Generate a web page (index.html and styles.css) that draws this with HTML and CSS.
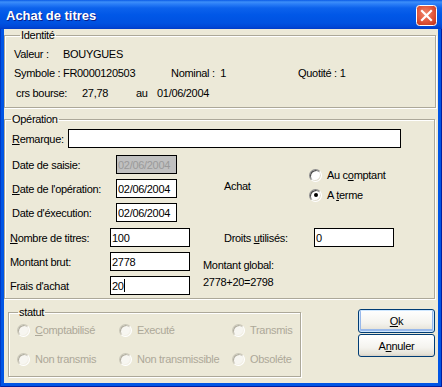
FILE: index.html
```html
<!DOCTYPE html>
<html lang="fr">
<head>
    <meta charset="UTF-8">
    <title>Achat de titres</title>
    <link rel="stylesheet" href="styles.css">
</head>
<body>
    <div class="window">
        <div class="titlebar">
            <span class="title">Achat de titres</span>
            <span class="close">
                <svg width="21" height="21" viewBox="0 0 21 21">
                    <defs>
                        <radialGradient id="cg" cx="45%" cy="40%" r="70%">
                            <stop offset="0" stop-color="#f08a6e"/>
                            <stop offset="0.6" stop-color="#e0553a"/>
                            <stop offset="1" stop-color="#c4371e"/>
                        </radialGradient>
                    </defs>
                    <rect x="0.5" y="0.5" width="20" height="20" rx="3" fill="url(#cg)" stroke="#fff"/>
                    <path d="M6 6 L15 15 M15 6 L6 15" stroke="#fff" stroke-width="2.2" stroke-linecap="square"/>
                </svg>
            </span>
        </div>
        <div class="client">
            <fieldset class="group identite">
                <legend>Identité</legend>
                <div class="id-row">
                    <span class="w-valeur">Valeur :</span><span>BOUYGUES</span>
                </div>
                <div class="id-row">
                    <span class="w-symbole">Symbole : FR0000120503</span><span class="w-nominal">Nominal : &nbsp;1</span><span>Quotité : 1</span>
                </div>
                <div class="id-row crs">
                    <span class="w-crs">crs bourse:</span><span class="w-cours">27,78</span><span class="w-au">au</span><span>01/06/2004</span>
                </div>
            </fieldset>

            <fieldset class="group operation">
                <legend>Opération</legend>
                <div class="remark-row">
                    <label class="remark-label"><u>R</u>emarque:</label>
                    <input class="edit remark" type="text" value="">
                </div>
                <div class="dates">
                    <div class="date-col">
                        <div class="date-row">
                            <label>Date de saisie:</label>
                            <input class="edit date disabled" type="text" value="02/06/2004" disabled>
                        </div>
                        <div class="date-row">
                            <label><u>D</u>ate de l'opération:</label>
                            <input class="edit date" type="text" value="02/06/2004">
                        </div>
                        <div class="date-row">
                            <label>Date d'éxecution:</label>
                            <input class="edit date" type="text" value="02/06/2004">
                        </div>
                    </div>
                    <div class="sens">Achat</div>
                    <div class="radio-col">
                        <div class="radio-item"><span class="radio"></span><span>Au c<u>o</u>mptant</span></div>
                        <div class="radio-item"><span class="radio checked"></span><span>A <u>t</u>erme</span></div>
                    </div>
                </div>
                <div class="amounts">
                    <label><u>N</u>ombre de titres:</label>
                    <input class="edit amount" type="text" value="100">
                    <div class="droits">
                        <label class="droits-label">Droits <u>u</u>tilisés:</label>
                        <input class="edit amount" type="text" value="0">
                    </div>
                    <label>Montant brut:</label>
                    <input class="edit amount" type="text" value="2778">
                    <div class="global">
                        <div>Montant global:</div>
                        <div>2778+20=2798</div>
                    </div>
                    <label>Frais d'achat</label>
                    <div class="edit amount">20<span class="caret"></span></div>
                </div>
            </fieldset>

            <div class="bottom">
                <fieldset class="group statut">
                    <legend>statut</legend>
                    <div class="statut-grid">
                        <div class="radio-item off"><span class="radio"></span><span><u>C</u>omptabilisé</span></div>
                        <div class="radio-item off"><span class="radio"></span><span>Executé</span></div>
                        <div class="radio-item off"><span class="radio"></span><span>Transmis</span></div>
                        <div class="radio-item off"><span class="radio"></span><span>Non transmis</span></div>
                        <div class="radio-item off"><span class="radio"></span><span>Non transmissible</span></div>
                        <div class="radio-item off"><span class="radio"></span><span>Obsoléte</span></div>
                    </div>
                </fieldset>
                <div class="buttons">
                    <button class="btn default"><u>O</u>k</button>
                    <button class="btn">A<u>n</u>nuler</button>
                </div>
            </div>
        </div>
    </div>
</body>
</html>
```

FILE: styles.css
```css
body {
    margin: 0;
    font-family: "Liberation Sans", Arial, sans-serif;
    font-size: 11px;
    letter-spacing: -0.3px;
    color: #000;
    background: #fff;
}
.window {
    width: 442px;
    height: 387px;
    display: flex;
    flex-direction: column;
    background: #0055e5;
    box-shadow: inset 1px 0 0 #0039c4, inset -1px 0 0 #001ea0, inset 0 -1px 0 #001ea0;
}
.titlebar {
    height: 29px;
    flex: none;
    display: flex;
    align-items: center;
    justify-content: space-between;
    padding: 0 5px 0 6px;
    background: linear-gradient(to bottom, #0a5ae6 0, #3d8ff9 2px, #2a7ef7 4px, #0c62ec 8px, #0057e7 15px, #0052e1 23px, #0047d6 27px, #003bc7 29px);
}
.title {
    color: #fff;
    font-weight: bold;
    font-size: 13px;
    letter-spacing: 0;
    text-shadow: 1px 1px 0 #0a1e8a;
    margin-top: 1px;
}
.close {
    display: flex;
    margin-top: 1px;
}
.client {
    flex: 1;
    margin: 0 4px 4px 4px;
    background: #ece9d8;
    display: flex;
    flex-direction: column;
}

/* group boxes */
.group {
    margin: 0;
    padding: 0;
    min-inline-size: 0;
    border: 1px solid #aca899;
    box-shadow: 1px 1px 0 #fff, inset 1px 1px 0 #fff;
}
.group legend {
    padding: 0 1px;
    margin-left: 6px;
    line-height: 12px;
}
.identite {
    margin-right: 2px;
    padding: 4px 0 4px 9px;
}
.id-row {
    display: flex;
    line-height: 19px;
}
.id-row.crs {
    margin-top: 1px;
    padding-left: 2px;
}
.w-valeur { width: 49px; }
.w-symbole { width: 157px; }
.w-nominal { width: 127px; }
.w-crs { width: 66px; }
.w-cours { width: 54px; }
.w-au { width: 21px; }

.operation {
    margin: 5px 3px 0 0;
    padding: 4px 0 3px 0;
}

/* edit controls */
.edit {
    box-sizing: border-box;
    height: 19px;
    margin: 0;
    padding: 0 1px;
    border: 1px solid #000;
    background: #fff;
    font: inherit;
    letter-spacing: inherit;
    color: #000;
    outline: none;
}
div.edit {
    display: flex;
    align-items: center;
}
.caret {
    width: 1px;
    height: 13px;
    background: #000;
}
.edit.disabled {
    background: #c0c0c0;
    color: #9a9a9a;
}
.remark-row {
    display: flex;
    align-items: center;
    padding-left: 7px;
}
.remark-label { width: 56px; }
.edit.remark { width: 333px; }

.dates {
    display: flex;
    margin-top: 7px;
    padding-left: 7px;
}
.date-col {
    display: flex;
    flex-direction: column;
    gap: 5px;
    width: 165px;
}
.date-row {
    display: flex;
    align-items: center;
}
.date-row label { width: 104px; }
.edit.date { width: 61px; }
.sens {
    width: 85px;
    margin-left: 47px;
    margin-top: 24px;
    line-height: 14px;
}
.radio-col {
    display: flex;
    flex-direction: column;
    gap: 6px;
    margin-top: 13px;
}
.radio-item {
    display: flex;
    align-items: center;
    gap: 5px;
    line-height: 14px;
}
.radio {
    box-sizing: border-box;
    width: 13px;
    height: 13px;
    border-radius: 50%;
    border: 1px solid;
    border-color: #8d8d8d #fff #fff #8d8d8d;
    box-shadow: inset 1px 1px 0 #4a4a4a, inset -1px -1px 0 #e2dfd2;
    background: radial-gradient(circle at 60% 60%, #fff 40%, #ececec);
    display: flex;
    align-items: center;
    justify-content: center;
}
.radio.checked::after {
    content: "";
    width: 4px;
    height: 4px;
    border-radius: 50%;
    background: #000;
}

.amounts {
    display: grid;
    grid-template-columns: 100px 80px 1fr;
    grid-template-rows: 19px 19px 19px;
    row-gap: 5px;
    align-items: center;
    margin-top: 6px;
    padding-left: 5px;
}
.edit.amount { width: 80px; }
.droits {
    display: flex;
    align-items: center;
    padding-left: 34px;
}
.droits-label { width: 90px; }
.global {
    grid-column: 3;
    grid-row: 2 / span 2;
    align-self: start;
    padding: 5px 0 0 13px;
    line-height: 17px;
}

/* bottom part */
.bottom {
    display: flex;
    align-items: flex-start;
}
.statut {
    width: 293px;
    box-sizing: border-box;
    margin: 7px 0 0 4px;
    padding: 4px 0 9px 8px;
}
.statut legend { margin-left: 1px; }
.statut-grid {
    display: grid;
    grid-template-columns: 102px 113px 1fr;
    grid-auto-rows: 16px;
    row-gap: 13px;
}
.radio-item.off {
    color: #aca899;
}
.radio-item.off .radio {
    border-color: #c9c6b7 #fff #fff #c9c6b7;
    box-shadow: inset 1px 1px 0 #b0ad9f, inset -1px -1px 0 #f2f0e6;
    background: #f7f6f1;
}
.buttons {
    display: flex;
    flex-direction: column;
    gap: 1px;
    margin: 10px 0 0 57px;
}
.btn {
    width: 77px;
    height: 23px;
    padding: 0;
    border: 1px solid #003c74;
    border-radius: 3px;
    background: linear-gradient(to bottom, #ffffff 0, #f4f3ee 60%, #e6e3d8 90%, #d6d0c5 100%);
    font: inherit;
    letter-spacing: inherit;
    color: #000;
}
.btn.default {
    height: 24px;
    box-shadow: inset 0 0 0 1px #cee7ff, inset 0 -1px 0 2px #98b8ea;
}
```
